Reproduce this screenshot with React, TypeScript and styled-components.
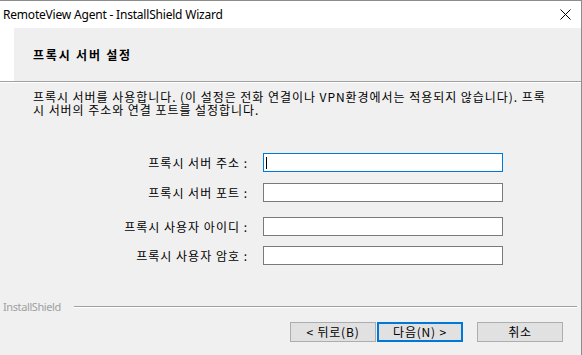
import React from "react";
import styled, { createGlobalStyle } from "styled-components";

const GlobalStyle = createGlobalStyle`
  html, body {
    margin: 0;
    padding: 0;
    background: #f0f0f0;
  }
  body {
    font-family: "Noto Sans CJK KR", "Noto Sans", sans-serif;
    font-size: 12px;
    color: #000;
  }
`;

const Window = styled.div`
  width: 582px;
  height: 355px;
  box-sizing: border-box;
  border-top: 1px solid #8c8c8c;
  border-right: 1px solid #8c8c8c;
  background: #f0f0f0;
  display: flex;
  flex-direction: column;
  overflow: hidden;
`;

const TitleBar = styled.div`
  height: 27px;
  background: #fff;
  display: flex;
  align-items: center;
  justify-content: space-between;
  padding: 0 10px 0 3px;
`;

const TitleText = styled.span`
  font-family: "Noto Sans", sans-serif;
  font-size: 12px;
  letter-spacing: -0.2px;
  color: #000;
`;

const Header = styled.div`
  height: 53px;
  background: #fff;
  padding-left: 14px;
  display: flex;
  border-bottom: 1px solid #a0a0a0;
  box-shadow: 0 1px 0 #fff;
`;

const HeaderPanel = styled.div`
  flex: 1;
  background: #efefef;
  display: flex;
  align-items: center;
  padding-left: 19px;
`;

const HeaderTitle = styled.h1`
  margin: 0;
  font-size: 12px;
  font-weight: 700;
  line-height: 12px;
  letter-spacing: 1.8px;
`;

const Body = styled.div`
  flex: 1;
  padding: 8px 0 0 33px;
  display: flex;
  flex-direction: column;
`;

const Intro = styled.p`
  margin: 0;
  line-height: 13px;
  letter-spacing: 0.95px;
  white-space: nowrap;
`;

const Form = styled.div`
  margin-top: 37px;
  display: flex;
  flex-direction: column;
`;

const FieldRow = styled.div<{ $gap: number }>`
  display: flex;
  align-items: center;
  margin-top: ${(p) => p.$gap}px;
`;

const Label = styled.label`
  width: 215px;
  text-align: right;
  margin-right: 15px;
  white-space: nowrap;
  letter-spacing: 1px;
`;

const Input = styled.div<{ $focused?: boolean }>`
  width: 240px;
  height: 19px;
  box-sizing: border-box;
  background: #fff;
  border: 1px solid ${(p) => (p.$focused ? "#0078d7" : "#7a7a7a")};
  display: flex;
  align-items: center;
  padding-left: 2px;
`;

const Caret = styled.span`
  width: 1px;
  height: 12px;
  background: #000;
`;

const Footer = styled.div`
  height: 56px;
  display: flex;
  flex-direction: column;
`;

const BrandRow = styled.div`
  height: 14px;
  display: flex;
  align-items: center;
  padding: 0 4px 0 3px;
`;

const Brand = styled.span`
  font-family: "Noto Sans", sans-serif;
  font-size: 11px;
  letter-spacing: -0.4px;
  color: #a0a0a0;
  margin-right: 13px;
`;

const Rule = styled.div`
  flex: 1;
  height: 1px;
  background: #a0a0a0;
  box-shadow: 0 1px 0 #fff;
`;

const ButtonRow = styled.div`
  margin-top: 9px;
  display: flex;
  justify-content: flex-end;
  padding-right: 18px;
`;

const Button = styled.button<{ $primary?: boolean; $space?: number }>`
  width: 86px;
  height: 20px;
  box-sizing: border-box;
  margin-left: ${(p) => p.$space ?? 0}px;
  background: #e1e1e1;
  border: ${(p) => (p.$primary ? "2px solid #0078d7" : "1px solid #adadad")};
  font-family: "Noto Sans CJK KR", "Noto Sans", sans-serif;
  font-size: 12px;
  line-height: 12px;
  letter-spacing: 0.8px;
  color: #000;
  padding: 0;
`;

const CloseIcon = () => (
  <svg width="11" height="11" viewBox="0 0 11 11">
    <path d="M0.5 0.5 L10.5 10.5 M10.5 0.5 L0.5 10.5" stroke="#000" strokeWidth="1" />
  </svg>
);

const fields = [
  { label: "프록시 서버 주소 :", gap: 0, focused: true },
  { label: "프록시 서버 포트 :", gap: 11 },
  { label: "프록시 사용자 아이디 :", gap: 15 },
  { label: "프록시 사용자 암호 :", gap: 10 },
];

export default function App() {
  return (
    <>
      <GlobalStyle />
      <Window>
        <TitleBar>
          <TitleText>RemoteView Agent - InstallShield Wizard</TitleText>
          <CloseIcon />
        </TitleBar>
        <Header>
          <HeaderPanel>
            <HeaderTitle>프록시 서버 설정</HeaderTitle>
          </HeaderPanel>
        </Header>
        <Body>
          <Intro>
            프록시 서버를 사용합니다. (이 설정은 전화 연결이나 VPN환경에서는 적용되지 않습니다). 프록
            <br />시 서버의 주소와 연결 포트를 설정합니다.
          </Intro>
          <Form>
            {fields.map((f) => (
              <FieldRow key={f.label} $gap={f.gap}>
                <Label>{f.label}</Label>
                <Input $focused={f.focused}>{f.focused && <Caret />}</Input>
              </FieldRow>
            ))}
          </Form>
        </Body>
        <Footer>
          <BrandRow>
            <Brand>InstallShield</Brand>
            <Rule />
          </BrandRow>
          <ButtonRow>
            <Button>&lt; 뒤로(B)</Button>
            <Button $primary $space={1}>다음(N) &gt;</Button>
            <Button $space={14}>취소</Button>
          </ButtonRow>
        </Footer>
      </Window>
    </>
  );
}
